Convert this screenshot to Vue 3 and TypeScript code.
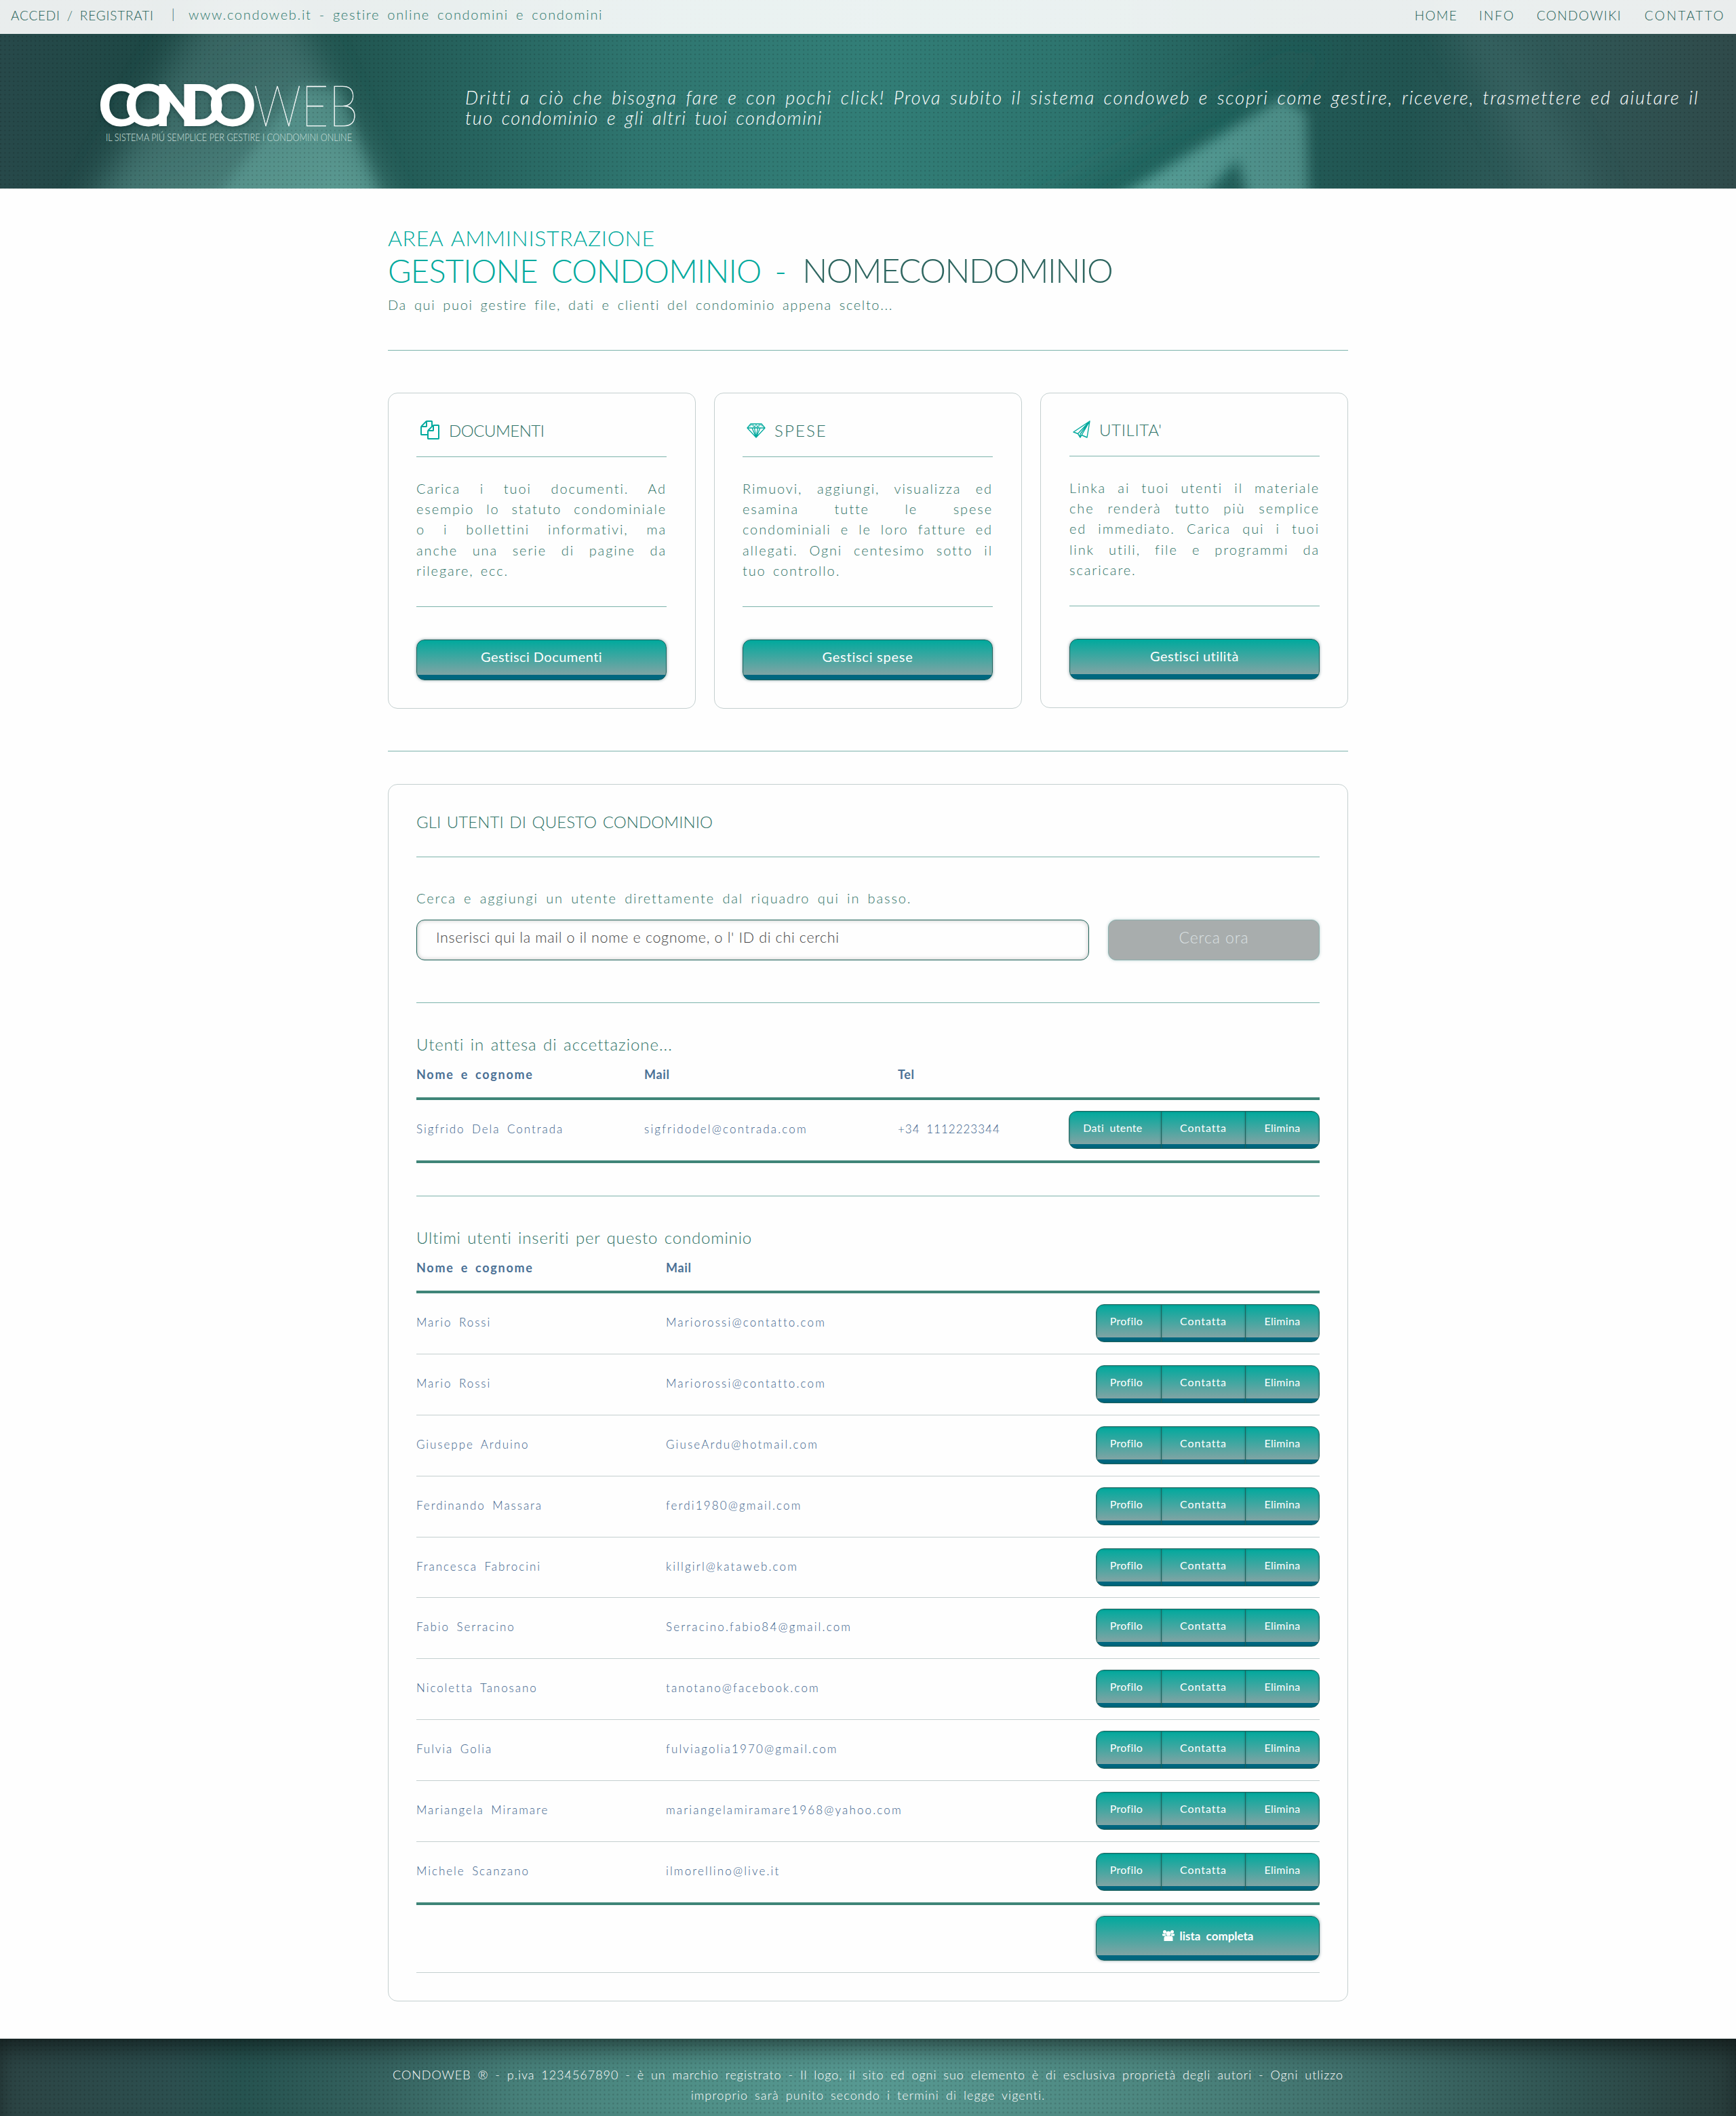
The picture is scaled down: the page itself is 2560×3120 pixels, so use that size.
<script setup lang="ts">
interface Card {
  key: 'documenti' | 'spese' | 'utilita'
  title: string
  text: string
  action: string
}
interface User {
  name: string
  mail: string
}

const nav: string[] = ['HOME', 'INFO', 'CONDOWIKI', 'CONTATTO']

const cards: Card[] = [
  {
    key: 'documenti',
    title: 'DOCUMENTI',
    text: 'Carica i tuoi documenti. Ad esempio lo statuto condominiale o i bollettini informativi, ma anche una serie di pagine da rilegare, ecc.',
    action: 'Gestisci Documenti',
  },
  {
    key: 'spese',
    title: 'SPESE',
    text: 'Rimuovi, aggiungi, visualizza ed esamina tutte le spese condominiali e le loro fatture ed allegati. Ogni centesimo sotto il tuo controllo.',
    action: 'Gestisci spese',
  },
  {
    key: 'utilita',
    title: "UTILITA'",
    text: 'Linka ai tuoi utenti il materiale che renderà tutto più semplice ed immediato. Carica qui i tuoi link utili, file e programmi da scaricare.',
    action: 'Gestisci utilità',
  },
]

const users: User[] = [
  { name: 'Mario Rossi', mail: 'Mariorossi@contatto.com' },
  { name: 'Mario Rossi', mail: 'Mariorossi@contatto.com' },
  { name: 'Giuseppe Arduino', mail: 'GiuseArdu@hotmail.com' },
  { name: 'Ferdinando Massara', mail: 'ferdi1980@gmail.com' },
  { name: 'Francesca Fabrocini', mail: 'killgirl@kataweb.com' },
  { name: 'Fabio Serracino', mail: 'Serracino.fabio84@gmail.com' },
  { name: 'Nicoletta Tanosano', mail: 'tanotano@facebook.com' },
  { name: 'Fulvia Golia', mail: 'fulviagolia1970@gmail.com' },
  { name: 'Mariangela Miramare', mail: 'mariangelamiramare1968@yahoo.com' },
  { name: 'Michele Scanzano', mail: 'ilmorellino@live.it' },
]
</script>

<template>
  <div class="page">
    <header class="hero">
      <svg class="hero-art" width="2560" height="278" viewBox="0 0 2560 278" preserveAspectRatio="none" aria-hidden="true">
        <defs>
          <linearGradient id="hbase" x1="0" x2="1" y1="0" y2="0">
            <stop offset="0" stop-color="#27494a" /><stop offset="0.09" stop-color="#1d4845" />
            <stop offset="0.2" stop-color="#215651" /><stop offset="0.27" stop-color="#26635e" />
            <stop offset="0.37" stop-color="#2f7670" /><stop offset="0.5" stop-color="#327e77" />
            <stop offset="0.62" stop-color="#2d746e" /><stop offset="0.73" stop-color="#225b57" />
            <stop offset="0.81" stop-color="#215451" /><stop offset="0.88" stop-color="#305a59" />
            <stop offset="1" stop-color="#2f4a4a" />
          </linearGradient>
          <linearGradient id="cone" x1="0.2" x2="0.8" y1="0" y2="1">
            <stop offset="0" stop-color="#355f5c" /><stop offset="0.45" stop-color="#447370" /><stop offset="1" stop-color="#62a29a" />
          </linearGradient>
          <linearGradient id="peak" x1="0" x2="1" y1="0" y2="0">
            <stop offset="0" stop-color="#62aca4" /><stop offset="1" stop-color="#52938d" />
          </linearGradient>
          <filter id="b9" x="-30%" y="-30%" width="160%" height="160%"><feGaussianBlur stdDeviation="9" /></filter>
          <filter id="b25" x="-60%" y="-60%" width="220%" height="220%"><feGaussianBlur stdDeviation="25" /></filter>
          <pattern id="dots" width="6.400" height="6.600" patternUnits="userSpaceOnUse"><rect width="2" height="2" fill="#000" opacity="0.16" /></pattern>
        </defs>
        <rect width="2560" height="278" fill="url(#hbase)" />
        <path d="M325 -40 L410 -40 L580 330 L120 330 Z" fill="url(#cone)" opacity=".8" filter="url(#b25)" />
        <path d="M1960 60 L1480 330 L1700 330 Z" fill="#1c625c" opacity=".7" filter="url(#b25)" />
        <path d="M2110 -20 L2180 -20 L2360 300 L2290 300 Z" fill="#3f6b69" opacity=".5" filter="url(#b25)" />
        <path d="M440 130 L500 130 L562 300 L300 320 Z" fill="#66a9a0" opacity=".45" filter="url(#b9)" />
        <path d="M1890 145 L1632 300 L1765 300 L1825 235 L1842 300 L1930 300 L1926 165 Z" fill="url(#peak)" opacity=".85" filter="url(#b9)" />
        <rect width="2560" height="278" fill="url(#dots)" />
      </svg>
      <div class="topbar">
        <div class="account">
          <span class="login">ACCEDI / REGISTRATI</span>
          <span class="bar">|</span>
          <span class="site">www.condoweb.it - gestire online condomini e condomini</span>
        </div>
        <nav class="nav"><a v-for="n in nav" :key="n" :class="n.toLowerCase()">{{ n }}</a></nav>
      </div>
      <div class="banner">
        <svg class="logo" width="400" height="120" viewBox="140 100 400 120">
          <g fill="#fff" font-family="Lato, sans-serif">
            <text class="logo-bold" y="186" x="145 184 228 265 308" font-size="86" font-weight="900">CONDO</text>
            <text y="186" x="374" font-size="84" font-weight="100" textLength="154" lengthAdjust="spacingAndGlyphs" stroke="#fff" stroke-width="0.4">WEB</text>
            <text y="208" x="156" font-size="15.5" font-weight="300" fill="#cfe0de" textLength="363" lengthAdjust="spacingAndGlyphs">IL SISTEMA PIÚ SEMPLICE PER GESTIRE I CONDOMINI ONLINE</text>
          </g>
        </svg>
        <p class="claim">
          <span>Dritti a ciò che bisogna fare e con pochi click! Prova subito il sistema condoweb e scopri come gestire, ricevere, trasmettere ed aiutare il</span><br>
          <span class="second">tuo condominio e gli altri tuoi condomini</span>
        </p>
      </div>
    </header>

    <main class="main">
      <h2 class="area">AREA AMMINISTRAZIONE</h2>
      <h1 class="title"><span>GESTIONE CONDOMINIO -</span><strong>NOMECONDOMINIO</strong></h1>
      <p class="lead">Da qui puoi gestire file, dati e clienti del condominio appena scelto...</p>
      <hr class="hr first">

      <section class="cards">
        <article v-for="c in cards" :key="c.key" class="card" :class="c.key">
          <h3 class="card-title">
            <svg v-if="c.key === 'documenti'" class="ic files" viewBox="0 0 1792 1792"><path fill="#00a99d" d="M1696 384q40 0 68 28t28 68v1216q0 40-28 68t-68 28h-960q-40 0-68-28t-28-68v-288h-544q-40 0-68-28t-28-68v-672q0-40 20-88t48-76l408-408q28-28 76-48t88-20h416q40 0 68 28t28 68v328q68-40 128-40h416zm-544 213l-299 299h299v-299zm-640-384l-299 299h299v-299zm196 647l316-316v-416h-384v416q0 40-28 68t-68 28h-416v640h512v-256q0-40 20-88t48-76zm956 804v-1152h-384v416q0 40-28 68t-68 28h-416v640h896z" /></svg>
            <svg v-else-if="c.key === 'spese'" class="ic diamond" viewBox="0 0 28 22" fill="none" stroke="#00a99d" stroke-width="1.3" stroke-linejoin="round"><path d="M6 1H22L27 7L14 21L1 7ZM1 7H27M8 7L14 21L20 7M11.500 7L14 21L16.500 7" /><path d="M4.500 5L7.500 2L11 6L14 2L17 6L20.500 2L23.500 5M9 2L14 6.500L19 2" stroke-width="0.9" /></svg>
            <svg v-else class="ic plane" viewBox="0 0 26 26" fill="none" stroke="#00a99d" stroke-width="1.4" stroke-linejoin="round"><path d="M25 1L1 17L7.500 19.500L11 25L13 21.500L21 25ZM25 1L7.500 19.500M25 1L11 20V25M25 1L13 21.500" /></svg>
            <span>{{ c.title }}</span>
          </h3>
          <hr class="hr">
          <p class="card-text">{{ c.text }}</p>
          <hr class="hr">
          <a class="btn">{{ c.action }}</a>
        </article>
      </section>
      <hr class="hr second">

      <section class="panel">
        <h3 class="panel-title">GLI UTENTI DI QUESTO CONDOMINIO</h3>
        <hr class="hr">
        <p class="hint">Cerca e aggiungi un utente direttamente dal riquadro qui in basso.</p>
        <div class="search">
          <div class="input">Inserisci qui la mail o il nome e cognome, o l' ID di chi cerchi</div>
          <div class="submit">Cerca ora</div>
        </div>
        <hr class="hr">
        <h4 class="sub waiting">Utenti in attesa di accettazione...</h4>
        <div class="thead pending"><span>Nome e cognome</span><span>Mail</span><span>Tel</span></div>
        <div class="tbody">
          <div class="row pending">
            <span>Sigfrido Dela Contrada</span><span>sigfridodel@contrada.com</span><span class="tel">+34 1112223344</span>
            <div class="group"><a class="wide">Dati utente</a><a class="contact">Contatta</a><a>Elimina</a></div>
          </div>
        </div>
        <hr class="hr">
        <h4 class="sub">Ultimi utenti inseriti per questo condominio</h4>
        <div class="thead"><span>Nome e cognome</span><span>Mail</span></div>
        <div class="tbody">
          <div v-for="(u, i) in users" :key="i" class="row">
            <span>{{ u.name }}</span><span>{{ u.mail }}</span>
            <div class="group"><a>Profilo</a><a class="contact">Contatta</a><a>Elimina</a></div>
          </div>
        </div>
        <div class="tfoot">
          <a class="btn all">
            <svg class="users" viewBox="0 0 18 16" fill="#fff"><circle cx="3.500" cy="2.500" r="2.500" /><circle cx="14.500" cy="2.500" r="2.500" /><circle cx="9" cy="5" r="3.500" /><path d="M0 5.500H5V8.500H1.500Q0 8.500 0 7ZM18 5.500H13V8.500H16.500Q18 8.500 18 7Z" /><path d="M2.500 16V11Q3 8.500 5 8.500H13Q15 8.500 15.500 11V16Z" /></svg>
            <span>lista completa</span>
          </a>
        </div>
      </section>
    </main>

    <footer class="footer">
      <p>CONDOWEB ® - p.iva 1234567890 - è un marchio registrato - Il logo, il sito ed ogni suo elemento è di esclusiva proprietà degli autori - Ogni utlizzo<br><span class="second">improprio sarà punito secondo i termini di legge vigenti.</span></p>
    </footer>
  </div>
</template>

<style>
body { margin: 0; background: #fefefe; }
</style>
<style scoped>
.page { width: 2560px; height: 3120px; overflow: hidden; font-family: Lato, sans-serif; font-weight: 300; color: #2f7266; background: #fefefe; }
h1, h2, h3, h4, p { margin: 0; font-weight: 300; white-space: nowrap; }

.hero { height: 278px; display: grid; }
.hero > * { grid-area: 1 / 1; }
.topbar { position: relative; height: 50px; display: flex; justify-content: space-between; background: rgba(255, 255, 255, .9); color: #245f56; font-size: 19px; box-sizing: border-box; padding: 0 18px 0 16px; word-spacing: 4px; }
.account { display: flex; white-space: nowrap; }
.login { width: 237px; line-height: 46px; letter-spacing: .8px; }
.bar { width: 25px; line-height: 42px; }
.site { color: #2c776c; line-height: 42px; font-size: 20px; letter-spacing: 1.7px; }
.nav { display: grid; grid-template-columns: 95px 85px 159px 117px; line-height: 46px; }
.nav .home { letter-spacing: 1.45px; }
.nav .info { letter-spacing: 2px; }
.nav .condowiki { letter-spacing: 1.4px; }
.nav .contatto { letter-spacing: 2.5px; }
.banner { position: relative; padding: 100px 0 0 140px; display: flex; align-items: flex-start; }
.logo { overflow: visible; }
.logo-bold { filter: drop-shadow(0 2px 3px rgba(0, 30, 30, .4)); }
.claim { margin: 29px 0 0 146px; font-size: 27px; line-height: 30px; font-style: italic; color: #fff; word-spacing: 4px; letter-spacing: 1.83px; }
.claim .second { letter-spacing: 1.5px; }

.main { width: 1416px; margin: 0 auto; padding-top: 53px; }
.area { font-size: 32px; line-height: 40px; color: #00a99d; word-spacing: 3px; letter-spacing: .63px; }
.title { font-size: 47px; line-height: 54px; height: 53px; color: #00a99d; word-spacing: 8px; letter-spacing: -.7px; display: flex; align-items: baseline; gap: 24px; }
.title strong { font-weight: 300; font-size: 49px; color: #2f6660; letter-spacing: -1.5px; }
.lead { font-size: 20px; line-height: 50px; word-spacing: 4px; letter-spacing: 1.634px; }
.hr { border: 0; height: 1px; margin: 0; background: #7cb3ab; }
.hr.first { margin: 42px 0 62px; }
.hr.second { margin: 62px 0 48px; }

.cards { display: grid; grid-template-columns: repeat(3, 454px); gap: 27px; align-items: start; }
.card { box-sizing: border-box; width: 454px; border: 1px solid #c4cfcf; border-radius: 14px; padding: 0 42px 41px 41px; }
.card-title { display: flex; padding: 40px 0 23px; font-size: 24px; line-height: 30px; }
.card.utilita { padding: 0 41px 41px 42px; }
.card.utilita .card-title { padding: 39px 0 23px; }
.documenti .card-title { letter-spacing: -.49px; }
.spese .card-title { letter-spacing: 2.1px; }
.utilita .card-title { letter-spacing: .66px; }
.ic { margin: 0 14px 0 6px; }
.files { width: 28px; height: 28px; }
.diamond { width: 28px; height: 22px; margin: 4px 13px 0 6px; }
.plane { width: 26px; height: 26px; margin: 1px 13px 0 5px; }
.card-text { margin: 31px 0 38px; height: 151px; font-size: 20px; line-height: 30.2px; text-align: justify; white-space: normal; letter-spacing: 1.88px; word-spacing: 3px; }
.utilita .card-text { word-spacing: 6px; }
.btn { display: flex; justify-content: center; margin-top: 48px; height: 60px; box-sizing: border-box; border: 1px solid #1f625c; border-radius: 12px; background: linear-gradient(#00a99d, #80a4a4 51px, #00677f 51px); box-shadow: 0 0 4px rgba(0, 60, 70, .45); color: #fff; font-size: 20px; font-weight: 400; line-height: 48px; letter-spacing: .45px; }
.spese .btn { letter-spacing: .75px; }

.panel { border: 1px solid #c4cfcf; border-radius: 14px; padding: 0 41px 41px; }
.panel-title { padding: 40px 0 36px; font-size: 24px; line-height: 30px; word-spacing: 2px; letter-spacing: .07px; }
.hint { padding: 45px 0 17px; font-size: 20px; line-height: 30px; word-spacing: 4px; letter-spacing: 1.878px; }
.search { display: flex; gap: 28px; margin-bottom: 62px; }
.input { box-sizing: border-box; width: 992px; height: 60px; border: 1px solid #1d6157; border-radius: 12px; box-shadow: inset 0 0 6px rgba(0, 0, 0, .25); padding-left: 28px; color: #444; font-size: 21.5px; line-height: 50px; letter-spacing: .654px; }
.submit { box-sizing: border-box; width: 312px; height: 60px; border: 1px solid #8cb0ad; border-radius: 12px; background: #a8adad; box-shadow: 0 0 4px rgba(0, 90, 90, .25); color: #dbe1e3; font-size: 23px; line-height: 50px; text-align: center; letter-spacing: .9px; }
.sub { padding: 46px 0 15px; font-size: 24px; line-height: 30px; word-spacing: 2px; letter-spacing: .85px; }
.sub.waiting { letter-spacing: .96px; }
.thead { display: grid; grid-template-columns: 368px 1fr; height: 28px; padding-bottom: 20px; font-size: 18px; line-height: 28px; font-weight: 700; color: #4a7095; word-spacing: 4px; justify-items: start; letter-spacing: 1.73px; }
.thead span + span { letter-spacing: .68px; }
.thead.pending { grid-template-columns: 336px 374px 1fr; }
.tbody { border-top: 4px solid #3f8578; border-bottom: 4px solid #3f8578; }
.row { box-sizing: border-box; display: grid; grid-template-columns: 368px 1fr auto; height: 88.9px; font-size: 17px; line-height: 85px; color: #39608a; word-spacing: 4px; justify-items: start; letter-spacing: 2.15px; }
.row > span:first-child { letter-spacing: 1.95px; }
.row .tel { letter-spacing: 1px; }
.row.pending { grid-template-columns: 336px 374px 1fr auto; height: 89px; }
.row + .row { height: 89.9px; border-top: 1px solid #c4cfcf; }
.group { display: flex; justify-self: end; margin-top: 16px; height: 56px; box-sizing: border-box; border: 1px solid #1f625c; border-radius: 12px; background: linear-gradient(#00a99d, #80a4a4 48px, #00677f 48px); overflow: hidden; color: #fff; font-size: 16px; font-weight: 400; line-height: 48px; letter-spacing: .35px; }
.group a { box-sizing: border-box; width: 124px; text-align: center; border-left: 1px solid #1f625c; box-shadow: inset 0 0 3px rgba(0, 60, 60, .4); }
.group a:first-child { width: 95px; border: 0; padding-right: 7px; }
.group a.wide { width: 135px; }
.group a:last-child { width: 109px; }
.group .contact { letter-spacing: .95px; }
.tbody + .hr { margin-top: 48px; }
.tfoot { display: flex; justify-content: flex-end; padding: 16px 0 17px; border-bottom: 1px solid #c4cfcf; }
.all { margin: 0; width: 330px; height: 66px; font-size: 17px; font-weight: 700; line-height: 58px; word-spacing: 4px; letter-spacing: 0; background: linear-gradient(#00a99d, #80a4a4 57px, #00677f 57px); }
.users { width: 18px; height: 16px; margin: 20px 8px 0 0; }

.footer { margin-top: 55px; height: 114px; box-sizing: border-box; padding-top: 38px; text-align: center; font-size: 18px; line-height: 30px; color: #fff; word-spacing: 4px; letter-spacing: .97px; background: radial-gradient(circle, rgba(0, 0, 0, .14) 1px, transparent 1.500px) 0 0 / 6.400px 6.600px, linear-gradient(90deg, #2c4444, #2c4f4f 10%, #265350 14%, #35625f 22%, #47807a 30%, #4f8f87 40%, #579992 50%, #529089 58%, #4d8780 66%, #40706c 78%, #305452 90%, #283c3b); box-shadow: inset 0 22px 34px -8px rgba(0, 0, 0, .55); }
.footer .second { letter-spacing: 1.09px; }
</style>
